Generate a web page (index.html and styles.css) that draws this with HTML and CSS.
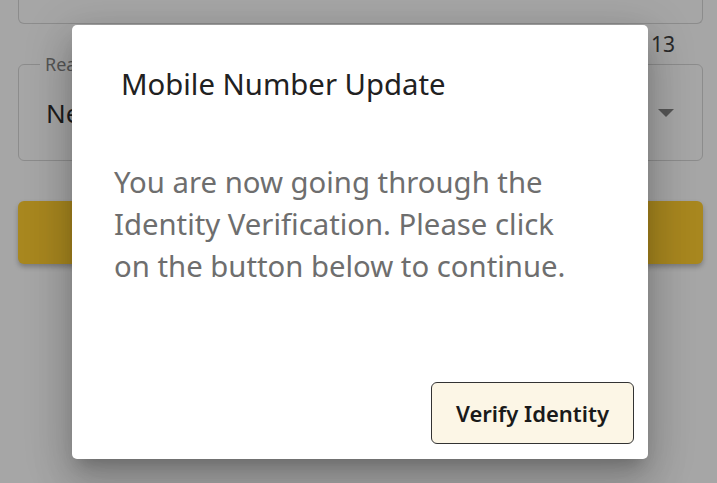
FILE: index.html
```html
<!DOCTYPE html>
<html lang="en">
<head>
<meta charset="utf-8">
<title>Mobile Number Update</title>
<link rel="stylesheet" href="styles.css">
</head>
<body>
<div class="page">
  <div class="field field-top"></div>
  <div class="helper">13</div>
  <div class="field field-select">
    <span class="legend">Reason</span>
    <span class="value">New number</span>
    <span class="caret"></span>
  </div>
  <div class="gold-btn"></div>
</div>

<div class="dialog" role="dialog">
  <h2 class="dialog-title">Mobile Number Update</h2>
  <p class="dialog-body">You are now going through the Identity Verification. Please click on the button below to continue.</p>
  <div class="dialog-actions">
    <button class="verify-btn">Verify Identity</button>
  </div>
</div>
</body>
</html>
```

FILE: styles.css
```css
html, body {
  margin: 0;
  padding: 0;
  width: 717px;
  height: 483px;
  overflow: hidden;
  background: #a6a6a6;
  font-family: "Noto Sans", Roboto, "Liberation Sans", sans-serif;
}

.page {
  padding: 0 14px 0 18px;
  display: flex;
  flex-direction: column;
}

.field {
  border: 1px solid #8c8c8c;
  border-radius: 6px;
  box-sizing: border-box;
  position: relative;
}

.field-top {
  height: 24px;
  border-top: none;
  border-top-left-radius: 0;
  border-top-right-radius: 0;
}

.helper {
  align-self: flex-end;
  margin: 8px 28px 0 0;
  font-size: 21px;
  line-height: 24px;
  height: 24px;
  color: #2a2a2a;
}

.field-select {
  margin-top: 8px;
  height: 97px;
  display: flex;
  align-items: center;
  padding: 0 28px 0 27px;
}

.legend {
  position: absolute;
  top: -13px;
  left: 21px;
  padding: 0 5px;
  font-size: 18px;
  line-height: 24px;
  color: #555;
  background: #a6a6a6;
}

.value {
  flex: 1;
  font-size: 26px;
  color: #1c1c1c;
  white-space: nowrap;
  overflow: hidden;
}

.caret {
  width: 0;
  height: 0;
  border-left: 8px solid transparent;
  border-right: 8px solid transparent;
  border-top: 8px solid #555;
}

.gold-btn {
  margin-top: 40px;
  height: 63px;
  border-radius: 6px;
  background: #a8871f;
  box-shadow: 0 3px 5px rgba(0,0,0,0.25);
}

.dialog {
  position: absolute;
  left: 72px;
  top: 25px;
  width: 576px;
  height: 434px;
  box-sizing: border-box;
  background: #fff;
  border-radius: 5px;
  display: flex;
  flex-direction: column;
  box-shadow: 0 11px 15px -7px rgba(0,0,0,0.2), 0 24px 38px 3px rgba(0,0,0,0.14), 0 9px 46px 8px rgba(0,0,0,0.12);
}

.dialog-title {
  margin: 0;
  padding: 40px 0 0 49px;
  font-size: 29.3px;
  font-weight: 400;
  line-height: 38px;
  color: #212121;
}

.dialog-body {
  margin: 0;
  padding: 58px 56px 0 42px;
  font-size: 29.3px;
  line-height: 42px;
  color: #6e6e6e;
}

.dialog-actions {
  margin-top: auto;
  display: flex;
  justify-content: flex-end;
  padding: 0 14px 15px 0;
}

.verify-btn {
  width: 203px;
  height: 62px;
  box-sizing: border-box;
  border: 1px solid #333;
  border-radius: 6px;
  background: #fcf6e6;
  font-family: "Noto Sans", Roboto, "Liberation Sans", sans-serif;
  font-size: 22px;
  font-weight: 600;
  color: #1a1a1a;
  padding: 0;
}
```
